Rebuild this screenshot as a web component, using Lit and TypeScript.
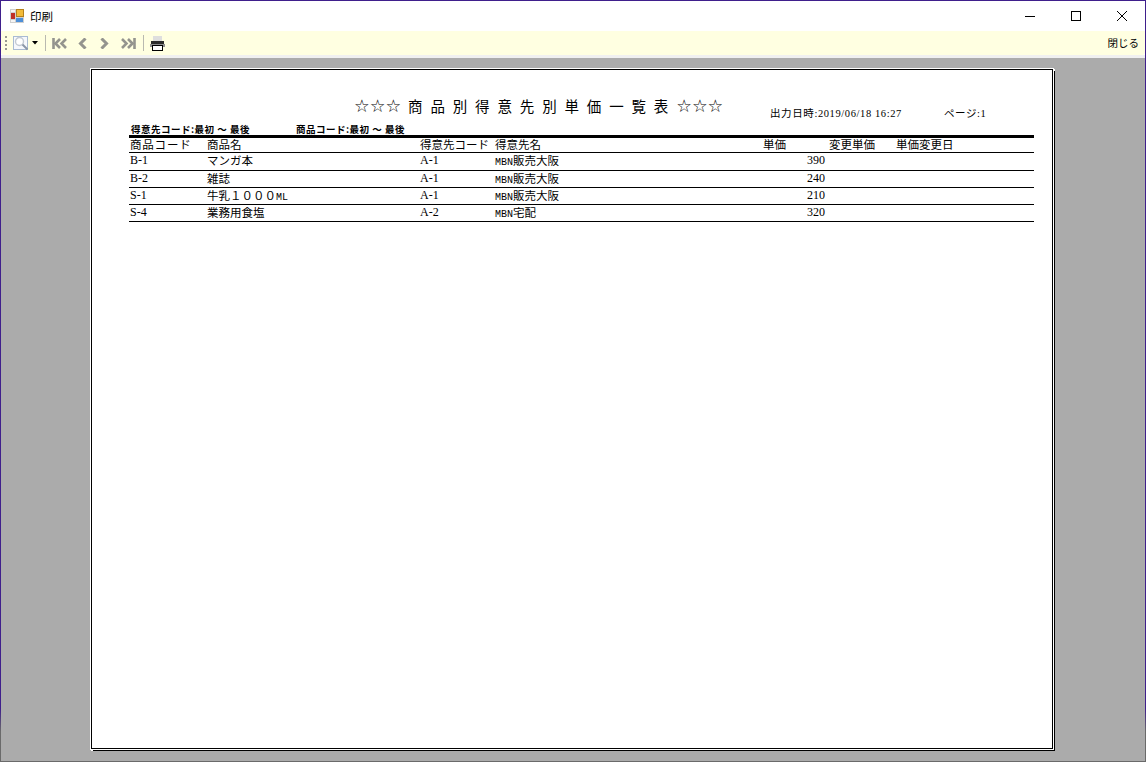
import { LitElement, html, css } from "lit";
import { customElement } from "lit/decorators.js";

const rows = [
  ["B-1", "マンガ本", "A-1", "MBN", "販売大阪", "390"],
  ["B-2", "雑誌", "A-1", "MBN", "販売大阪", "240"],
  ["S-1", "牛乳１０００ML", "A-1", "MBN", "販売大阪", "210"],
  ["S-4", "業務用食塩", "A-2", "MBN", "宅配", "320"],
];

@customElement("app-root")
export class AppRoot extends LitElement {
  static styles = css`
    :host {
      display: block;
      width: 1146px;
      height: 762px;
      box-sizing: border-box;
      font-family: "Noto Sans CJK JP", "Liberation Sans", sans-serif;
      color: #000;
    }
    .win {
      width: 100%;
      height: 100%;
      box-sizing: border-box;
      display: flex;
      flex-direction: column;
      border: 1px solid transparent;
      border-image: linear-gradient(#3f1f8c 93%, #6a6a6a 96%) 1;
      background: #fff;
    }
    .titlebar {
      height: 30px;
      flex: none;
      display: flex;
      align-items: center;
      padding-left: 9px;
      background: #fff;
    }
    .title {
      margin-left: 6px;
      font-size: 11.5px;
      line-height: 16px;
    }
    .spacer { flex: 1; }
    .wc {
      width: 46px;
      height: 30px;
      display: flex;
      align-items: center;
      justify-content: center;
    }
    .toolbar {
      height: 24px;
      flex: none;
      display: flex;
      align-items: center;
      background: #ffffe1;
      border-radius: 0 0 3px 3px;
      padding-left: 3px;
    }
    .grip { width: 3px; height: 15px; margin-right: 6px; }
    .tb-icon { display: block; flex: none; }
    .sep { width: 1px; height: 16px; background: #b9b9b0; flex: none; }
    .close {
      font-size: 10.5px;
      line-height: 16px;
      margin-right: 6px;
    }
    .band { height: 3px; flex: none; background: #f0f0f0; }
    .preview {
      flex: 1;
      min-height: 0;
      background: #ababab;
      padding: 11px 0 0 90px;
    }
    .page {
      width: 962px;
      height: 680px;
      box-sizing: border-box;
      background: #fff;
      border: 1px solid #000;
      outline: 1px solid #fff;
      box-shadow: 2px 2px 0 0 #000, 1px 1px 0 1px #fff;
      padding: 0 18px 0 37px;
      font-family: "Liberation Serif", "Noto Sans CJK JP", serif;
    }
    .head {
      height: 30px;
      padding-top: 25px;
      display: flex;
      align-items: flex-start;
    }
    .report-title {
      margin-left: 225px;
      width: 400px;
      font-family: "Noto Sans CJK JP", sans-serif;
      font-size: 14.5px;
      line-height: 22px;
      white-space: nowrap;
    }
    .stars { font-size: 17.5px; font-family: "DejaVu Sans", sans-serif; }
    .gap { display: inline-block; width: 7px; }
    .t { display: inline-block; width: 22.35px; }
    .meta {
      margin-top: 12px;
      font-size: 10.5px;
      letter-spacing: 0.6px;
      line-height: 14px;
      white-space: nowrap;
    }
    .meta b { font-weight: 400; font-size: 10.5px; letter-spacing: 0.6px; }
    .date { margin-left: 16px; width: 174px; }
    .filters {
      display: flex;
      height: 10px;
      padding-left: 2px;
      font-family: "Noto Sans CJK JP", sans-serif;
      font-size: 9.5px;
      line-height: 9px;
      letter-spacing: 0.5px;
      font-weight: 700;
      white-space: nowrap;
    }
    .filters span:first-child { width: 165px; }
    .thick { height: 3px; background: #000; }
    .row {
      display: grid;
      grid-template-columns: 77px 213px 75px 268px 66px 67px 1fr;
      height: 16px;
      border-bottom: 1px solid #000;
      font-size: 12px;
      line-height: 15px;
      white-space: nowrap;
    }
    .row.first { height: 17px; }
    .row > span { padding-left: 1px; }
    .num { text-align: right; padding-right: 3px; }
    .row.hdr { height: 14px; line-height: 12px; font-size: 11.5px; font-family: "Noto Sans CJK JP", sans-serif; }
    .hdr .wide { letter-spacing: 0.8px; }
    .cjk { font-family: "Noto Sans CJK JP", sans-serif; font-size: 11.5px; }
    .mono { font-family: "Liberation Mono", monospace; font-size: 10px; }
  `;

  private winControls() {
    return html`
      <div class="wc"><svg width="10" height="10" viewBox="0 0 10 10"><path d="M0 5.5h10" stroke="#000" fill="none"/></svg></div>
      <div class="wc"><svg width="10" height="10" viewBox="0 0 10 10"><rect x=".5" y=".5" width="9" height="9" stroke="#000" fill="none"/></svg></div>
      <div class="wc"><svg width="10" height="10" viewBox="0 0 10 10"><path d="M0 0l10 10M10 0L0 10" stroke="#000" fill="none"/></svg></div>
    `;
  }

  private name(v: string) {
    if (v.endsWith("ML")) {
      return html`${v.slice(0, -2)}<span class="mono">ML</span>`;
    }
    return v;
  }

  render() {
    return html`
      <div class="win">
        <div class="titlebar">
          <svg width="14" height="14" viewBox="0 0 14 14">
            <rect x="0" y="0" width="14" height="14" fill="#cfcfcf"/>
            <rect x="1" y="1" width="4" height="2" fill="#f4f4f4"/>
            <rect x="6.5" y=".5" width="7" height="7" fill="#f2bb3a" stroke="#b5801c"/>
            <rect x="1" y="4" width="4" height="6" fill="#bf2f26"/>
            <rect x="6" y="9" width="7" height="4" fill="#4d8fd8"/>
            <rect x="1" y="11" width="4" height="2" fill="#f4f4f4"/>
          </svg>
          <span class="title">印刷</span>
          <span class="spacer"></span>
          ${this.winControls()}
        </div>
        <div class="toolbar">
          <svg class="grip" viewBox="0 0 3 15">
            <g fill="#9a9a90"><rect x="1" y="0" width="2" height="2"/><rect x="1" y="4" width="2" height="2"/><rect x="1" y="8" width="2" height="2"/><rect x="1" y="12" width="2" height="2"/></g>
          </svg>
          <svg class="tb-icon" width="16" height="15" viewBox="0 0 16 15" style="margin-right:3px">
            <rect x=".5" y=".5" width="14" height="13" fill="#f6f8fc" stroke="#a9bbd3"/>
            <circle cx="6.5" cy="5.5" r="4" fill="#fff" stroke="#c3cad3" stroke-width="1.4"/>
            <path d="M9.5 8.5l5 5" stroke="#8b97a8" stroke-width="2"/>
          </svg>
          <svg class="tb-icon" width="7" height="4" viewBox="0 0 7 4" style="margin-right:6px"><path d="M0 0h6L3 3.5z" fill="#000"/></svg>
          <div class="sep" style="margin-right:6px"></div>
          <svg class="tb-icon" width="15" height="11" viewBox="0 0 15 11" style="margin-right:11px">
            <g fill="none" stroke="#94948e" stroke-width="2.6"><path d="M1.5 0v11"/><path d="M8 1L3.5 5.5 8 10"/><path d="M14 1L9.5 5.5 14 10"/></g>
          </svg>
          <svg class="tb-icon" width="9" height="11" viewBox="0 0 9 11" style="margin-right:13px">
            <path d="M7.5 .5L2.5 5.5l5 5" fill="none" stroke="#94948e" stroke-width="3"/>
          </svg>
          <svg class="tb-icon" width="9" height="11" viewBox="0 0 9 11" style="margin-right:12px">
            <path d="M1.5 .5l5 5-5 5" fill="none" stroke="#94948e" stroke-width="3"/>
          </svg>
          <svg class="tb-icon" width="15" height="11" viewBox="0 0 15 11" style="margin-right:7px">
            <g fill="none" stroke="#94948e" stroke-width="2.6"><path d="M13.5 0v11"/><path d="M7 1l4.5 4.5L7 10"/><path d="M1 1l4.5 4.5L1 10"/></g>
          </svg>
          <div class="sep" style="margin-right:6px"></div>
          <svg class="tb-icon" width="15" height="15" viewBox="0 0 15 15">
            <rect x="3" y="0" width="9" height="6" fill="#dedede"/>
            <rect x="1" y="5" width="13" height="3" fill="#2b2b2b"/>
            <rect x="0" y="8" width="15" height="3" fill="#8c8c8c"/>
            <rect x="2.5" y="9.5" width="10" height="5" fill="#fff" stroke="#000"/>
          </svg>
          <span class="spacer"></span>
          <span class="close">閉じる</span>
        </div>
        <div class="band"></div>
        <div class="preview">
          <div class="page">
            <div class="head">
              <div class="report-title">
                <span class="stars">☆☆☆</span><span class="gap"></span>${"商品別得意先別単価一覧表"
                  .split("")
                  .map((c) => html`<span class="t">${c}</span>`)}<span class="stars">☆☆☆</span>
              </div>
              <div class="meta date"><b>出力日時:</b>2019/06/18 16:27</div>
              <div class="meta"><b>ページ:</b>1</div>
            </div>
            <div class="filters"><span>得意先コード:最初 ～ 最後</span><span>商品コード:最初 ～ 最後</span></div>
            <div class="thick"></div>
            <div class="row hdr">
              <span class="wide">商品コード</span><span>商品名</span><span>得意先コード</span><span>得意先名</span><span>単価</span><span>変更単価</span><span>単価変更日</span>
            </div>
            ${rows.map(
              (r, i) => html`<div class="row ${i === 0 ? "first" : ""}">
                <span>${r[0]}</span><span class="cjk">${this.name(r[1])}</span><span>${r[2]}</span><span class="cjk"><span class="mono">${r[3]}</span>${r[4]}</span><span class="num">${r[5]}</span><span></span><span></span>
              </div>`
            )}
          </div>
        </div>
      </div>
    `;
  }
}
